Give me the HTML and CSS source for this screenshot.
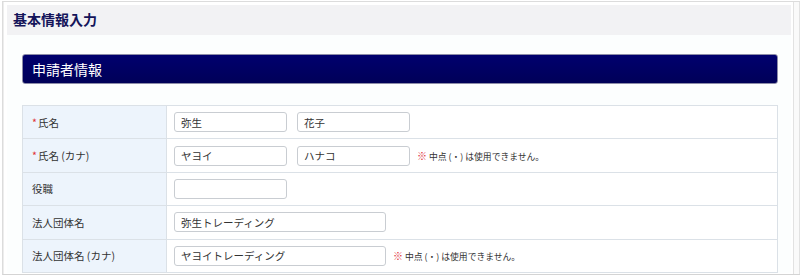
FILE: index.html
```html
<!DOCTYPE html>
<html lang="ja">
<head>
  <meta charset="UTF-8">
  <title>基本情報入力</title>
  <link rel="stylesheet" href="styles.css">
</head>
<body>

<div class="page">
  <div class="main">
    <div class="page-head">基本情報入力</div>

    <div class="content">
      <h2 class="section-bar">申請者情報</h2>

      <table class="form-table">
        <tr>
          <th><span class="req">*</span>氏名</th>
          <td>
            <div class="field">
              <input type="text" class="name" value="弥生">
              <input type="text" class="name" value="花子">
            </div>
          </td>
        </tr>
        <tr>
          <th><span class="req">*</span>氏名 (カナ)</th>
          <td>
            <div class="field">
              <input type="text" class="name" value="ヤヨイ">
              <input type="text" class="name" value="ハナコ">
              <span class="note"><span class="mark">※</span> 中点 (・) は使用できません。</span>
            </div>
          </td>
        </tr>
        <tr>
          <th>役職</th>
          <td>
            <div class="field">
              <input type="text" class="name" value="">
            </div>
          </td>
        </tr>
        <tr>
          <th>法人団体名</th>
          <td>
            <div class="field">
              <input type="text" class="wide" value="弥生トレーディング">
            </div>
          </td>
        </tr>
        <tr>
          <th>法人団体名 (カナ)</th>
          <td>
            <div class="field">
              <input type="text" class="wide" value="ヤヨイトレーディング">
              <span class="note"><span class="mark">※</span> 中点 (・) は使用できません。</span>
            </div>
          </td>
        </tr>
      </table>
    </div>
  </div>
  <div class="rail"></div>
</div>

</body>
</html>
```

FILE: styles.css
```css
body {
  font-family: "Noto Sans CJK JP", "Noto Sans", sans-serif;
  background-color: #fff;
  margin: 0;
  color: #333;
  overflow: hidden;
}
.page {
  display: flex;
  height: 272px;
  margin: 1px 0 0 2px;
  border-top: 1px solid #dcdcdc;
  border-left: 1px solid #dcdcdc;
  border-bottom: 1px solid #d4d4d4;
}
.main {
  flex: 1;
  padding: 3px 0 0 3px;
  border-left: 1px solid #ededed;
}
.rail {
  width: 5px;
  margin-left: 2px;
  border-left: 1px solid #e2e2e2;
  border-right: 1px solid #e2e2e2;
  background: #fafafa;
}
.page-head {
  background-color: #f2f2f4;
  height: 30px;
  line-height: 28px;
  padding-left: 6px;
  font-size: 14px;
  font-weight: bold;
  color: #14145a;
}
.content {
  padding: 19px 13px 0 15px;
  background: #fcfefe;
}
.section-bar {
  margin: 0 0 21px 0;
  height: 30px;
  line-height: 29px;
  box-sizing: border-box;
  padding-left: 9px;
  font-size: 14px;
  font-weight: normal;
  color: #fff;
  background: linear-gradient(#00006e, #000058);
  border: 1px solid #8c8ca8;
  border-radius: 3px;
}
.form-table {
  width: 100%;
  border-collapse: collapse;
  font-size: 10.5px;
}
.form-table th,
.form-table td {
  border: 1px solid #dbe1e7;
  height: 32.4px;
  padding: 0;
}
.form-table th {
  width: 134px;
  text-align: left;
  font-weight: normal;
  padding-left: 9px;
  background-color: #edf4fc;
  color: #333;
}
.form-table td {
  padding-left: 7px;
  background: #fff;
}
.field {
  display: flex;
  align-items: center;
  gap: 10px;
}
.req {
  color: #e0303a;
  margin-right: 1px;
}
input {
  font-family: inherit;
  font-size: 10.5px;
  color: #333;
  height: 20px;
  box-sizing: border-box;
  border: 1px solid #c9cdd2;
  border-radius: 3px;
  padding: 0 6px;
  margin: 0;
  background: #fff;
}
input.name {
  width: 113px;
}
input.wide {
  width: 212px;
}
.note {
  margin-left: -3px;
  font-size: 8.8px;
  color: #333;
}
.mark {
  color: #e0303a;
  font-size: 10px;
}
```
